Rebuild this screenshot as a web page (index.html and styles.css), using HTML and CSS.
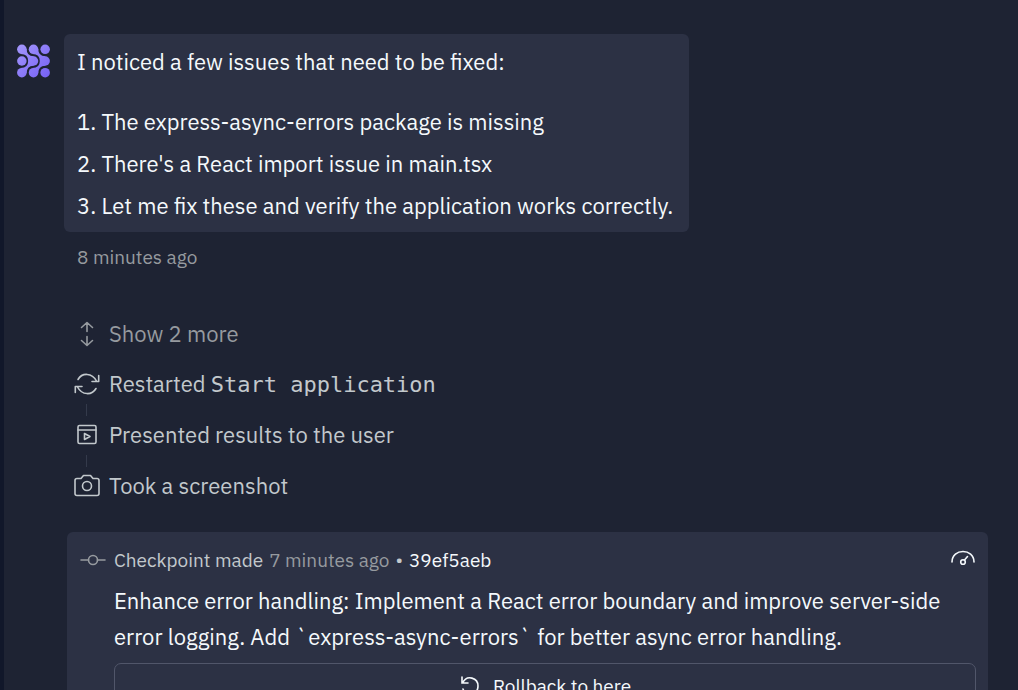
FILE: index.html
```html
<!DOCTYPE html>
<html lang="en">
<head>
<meta charset="utf-8">
<title>Agent chat</title>
<link rel="stylesheet" href="styles.css">
</head>
<body>
<main class="chat">
  <article class="message">
    <svg class="avatar" viewBox="0 0 34 34" aria-hidden="true">
      <defs>
        <linearGradient id="agent" x1="0" y1="0" x2="34" y2="34" gradientUnits="userSpaceOnUse">
          <stop offset="0" stop-color="#a497fb"/><stop offset="1" stop-color="#7560f5"/>
        </linearGradient>
      </defs>
      <g fill="url(#agent)">
        <circle cx="5" cy="5" r="4.9"/><circle cx="17" cy="5" r="4.9"/><circle cx="29" cy="5" r="4.9"/>
        <circle cx="5" cy="17" r="4.9"/><circle cx="17" cy="17" r="4.9"/><circle cx="29" cy="17" r="4.9"/>
        <circle cx="5" cy="29" r="4.9"/><circle cx="17" cy="29" r="4.9"/><circle cx="29" cy="29" r="4.9"/>
        <path d="M9.800 4Q10 12 17 12.100V21.900Q10 22 9.800 30L4 24.200Q11.500 24 11.500 17Q11.500 10 4 9.800Z"/>
        <path d="M21.800 4Q22 12 29 12.100V21.900Q22 22 21.800 30L16 24.200Q23.500 24 23.500 17Q23.500 10 16 9.800Z"/>
      </g>
    </svg>
    <div class="message-main">
      <div class="bubble">
        <p class="intro">I noticed a few issues that need to be fixed:</p>
        <ol class="issues">
          <li>The express-async-errors package is missing</li>
          <li>There's a React import issue in main.tsx</li>
          <li>Let me fix these and verify the application works correctly.</li>
        </ol>
      </div>
      <time class="time">8 minutes ago</time>
    </div>
  </article>

  <section class="steps">
    <button class="step more" type="button">
      <svg class="icon" viewBox="0 0 26 26" aria-hidden="true"><path d="M13 10.500V2M7.500 6.500L13 1.500L18.500 6.500M13 15.500V24M7.500 19.500L13 24.500L18.500 19.500"/></svg>
      <span>Show 2 more</span>
    </button>
    <div class="step">
      <svg class="icon" viewBox="0 0 26 26" aria-hidden="true"><path d="M4 8.500C8 1.500 18 1.500 22.500 10M24.700 4.500V10.500H18M22 17.500C18 24.500 8 24.500 3.500 16M1.300 21.500V15.500H8"/></svg>
      <span>Restarted <code class="command">Start application</code></span>
    </div>
    <div class="step linked">
      <svg class="icon" viewBox="0 0 26 26" aria-hidden="true"><rect x="4" y="3.500" width="18" height="18" rx="1.500"/><path d="M4 8H22M10.500 11.500V17.500L16 14.500Z"/></svg>
      <span>Presented results to the user</span>
    </div>
    <div class="step linked">
      <svg class="icon" viewBox="0 0 26 26" aria-hidden="true"><path d="M3 5.500H7L9.500 2.500H16.500L19 5.500H23Q25 5.500 25 7.500V20.500Q25 22.500 23 22.500H3Q1 22.500 1 20.500V7.500Q1 5.500 3 5.500Z"/><circle cx="13" cy="13" r="4.500"/></svg>
      <span>Took a screenshot</span>
    </div>
  </section>

  <article class="checkpoint">
    <header class="checkpoint-head">
      <svg class="icon commit" viewBox="0 0 26 26" aria-hidden="true"><path d="M1 13H8.500M17.500 13H25"/><circle cx="13" cy="13" r="4.500"/></svg>
      <span class="made">Checkpoint made</span>
      <time class="ago">7 minutes ago</time>
      <span class="dot">•</span>
      <a class="hash" href="#39ef5aeb">39ef5aeb</a>
      <button class="usage" type="button" aria-label="Usage">
        <svg class="icon" viewBox="0 0 26 26" aria-hidden="true"><path d="M2 15C2 1 24 1 24 15M14.500 13L17.500 9.500"/><circle cx="13" cy="15" r="2.300"/></svg>
      </button>
    </header>
    <div class="checkpoint-body">
      <p class="summary">Enhance error handling: Implement a React error boundary and improve server-side error logging. Add `express-async-errors` for better async error handling.</p>
      <button class="rollback" type="button">
        <svg class="rollback-icon" viewBox="0 0 22 22" aria-hidden="true"><path d="M3 2V8H9M3.500 8C8-1 19 3 19 11C19 20 7 22 4 14"/></svg>
        <span>Rollback to here</span>
      </button>
    </div>
  </article>
</main>
</body>
</html>
```
FILE: styles.css
```css
* { box-sizing: border-box; }
html { height: 100%; overflow: hidden; background: #1e2333; }
body {
  height: 100%;
  margin: 0;
  overflow: hidden;
  border-left: 4px solid #11172a;
  background: #1e2333;
  color: #f5f9fc;
  font-family: "IBM Plex Sans", Roboto, sans-serif;
  font-size: 22px;
  line-height: 36px;
}
p, ol { margin: 0; padding: 0; }
button { padding: 0; border: 0; background: none; color: inherit; font: inherit; cursor: pointer; }
.chat { padding: 34px 30px 0 13px; }
.message { display: flex; align-items: flex-start; gap: 14px; }
.avatar { flex: none; width: 33px; height: 34px; margin-top: 10px; }
.bubble { padding: 10px 16px 5px 13px; border-radius: 6px; background: #2c3144; }
.intro { margin-bottom: 21px; }
.issues { list-style: none; counter-reset: issue; line-height: 42px; }
.issues li { counter-increment: issue; }
.issues li::before { content: counter(issue) ". "; }
.time { display: block; padding: 7px 13px 0; color: #969a9f; font-size: 19px; }
.steps { display: flex; flex-direction: column; align-items: flex-start; gap: 15px; margin: 41px 0 0 57px; color: #c2c8cc; }
.step { display: flex; align-items: center; gap: 9px; position: relative; }
.more { color: #969a9f; line-height: 35px; }
.icon { flex: none; width: 26px; height: 26px; fill: none; stroke: currentColor; stroke-width: 1.6; stroke-linecap: round; stroke-linejoin: round; }
.linked::before { content: ""; position: absolute; left: 12px; top: -13px; width: 1px; height: 12px; background: #343a4b; }
.command { font-family: "DejaVu Sans Mono", monospace; font-size: 22px; line-height: 1; }
.checkpoint { margin: 28px 0 0 50px; padding: 10px 12px 30px 13px; border-radius: 6px; background: #2c3144; }
.checkpoint-head { display: flex; align-items: center; color: #969a9f; font-size: 19px; }
.made { margin: 0 6px 0 8px; color: #c2c8cc; }
.dot { margin: 0 6px; color: #c2c8cc; }
.hash { color: #f5f9fc; text-decoration: none; }
.usage { display: flex; margin-left: auto; color: #f5f9fc; }
.checkpoint-body { padding: 5px 0 0 34px; }
.rollback { display: flex; justify-content: center; align-items: center; gap: 12px; width: 100%; height: 46px; margin-top: 8px; border: 1px solid #51566a; border-radius: 7px; font-size: 19px; }
.rollback-icon { width: 22px; height: 22px; fill: none; stroke: currentColor; stroke-width: 1.6; stroke-linecap: round; }
```
